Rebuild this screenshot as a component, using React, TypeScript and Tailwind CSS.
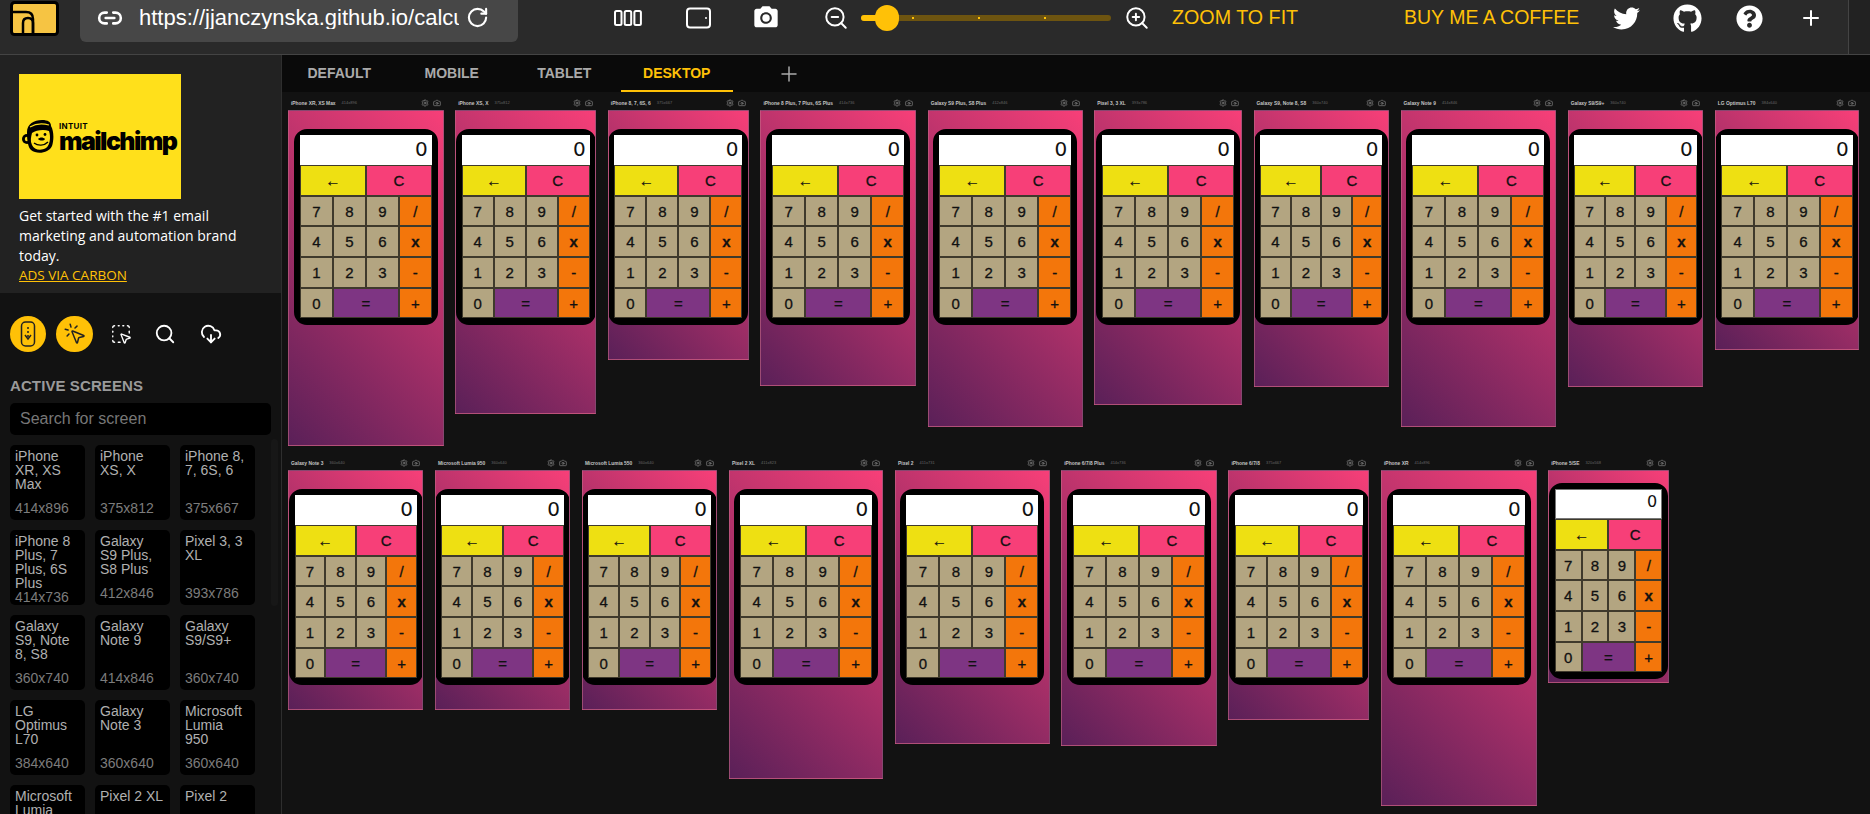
import React from 'react';
import {
  Camera,
  CloudDownload,
  Link2,
  MousePointerClick,
  Plus,
  RotateCw,
  Search,
  Settings,
  SquareDashedMousePointer,
  ZoomIn,
  ZoomOut,
} from 'lucide-react';
import { FaGithub, FaQuestionCircle, FaTwitter } from 'react-icons/fa';
import { MdPhotoCamera } from 'react-icons/md';

const SCALE = 0.375;

interface Device {
  name: string;
  w: number;
  h: number;
}

const topRow: Device[] = [
  { name: 'iPhone XR, XS Max', w: 414, h: 896 },
  { name: 'iPhone XS, X', w: 375, h: 812 },
  { name: 'iPhone 8, 7, 6S, 6', w: 375, h: 667 },
  { name: 'iPhone 8 Plus, 7 Plus, 6S Plus', w: 414, h: 736 },
  { name: 'Galaxy S9 Plus, S8 Plus', w: 412, h: 846 },
  { name: 'Pixel 3, 3 XL', w: 393, h: 786 },
  { name: 'Galaxy S9, Note 8, S8', w: 360, h: 740 },
  { name: 'Galaxy Note 9', w: 414, h: 846 },
  { name: 'Galaxy S9/S9+', w: 360, h: 740 },
  { name: 'LG Optimus L70', w: 384, h: 640 },
];

const bottomRow: Device[] = [
  { name: 'Galaxy Note 3', w: 360, h: 640 },
  { name: 'Microsoft Lumia 950', w: 360, h: 640 },
  { name: 'Microsoft Lumia 550', w: 360, h: 640 },
  { name: 'Pixel 2 XL', w: 411, h: 823 },
  { name: 'Pixel 2', w: 411, h: 731 },
  { name: 'iPhone 6/7/8 Plus', w: 414, h: 736 },
  { name: 'iPhone 6/7/8', w: 375, h: 667 },
  { name: 'iPhone XR', w: 414, h: 896 },
  { name: 'iPhone 5/SE', w: 320, h: 568 },
];

const cards = [
  { name: 'iPhone XR, XS Max', size: '414x896' },
  { name: 'iPhone XS, X', size: '375x812' },
  { name: 'iPhone 8, 7, 6S, 6', size: '375x667' },
  { name: 'iPhone 8 Plus, 7 Plus, 6S Plus', size: '414x736' },
  { name: 'Galaxy S9 Plus, S8 Plus', size: '412x846' },
  { name: 'Pixel 3, 3 XL', size: '393x786' },
  { name: 'Galaxy S9, Note 8, S8', size: '360x740' },
  { name: 'Galaxy Note 9', size: '414x846' },
  { name: 'Galaxy S9/S9+', size: '360x740' },
  { name: 'LG Optimus L70', size: '384x640' },
  { name: 'Galaxy Note 3', size: '360x640' },
  { name: 'Microsoft Lumia 950', size: '360x640' },
  { name: 'Microsoft Lumia 550', size: '360x640' },
  { name: 'Pixel 2 XL', size: '411x823' },
  { name: 'Pixel 2', size: '411x731' },
];

const keyBase =
  'flex items-center justify-center border border-[#3f3a2c] text-[15px] leading-none text-[#111] [-webkit-text-stroke:0.3px_#111]';
const num = `${keyBase} bg-[#b3a581]`;
const op = `${keyBase} bg-[#f3760b]`;

function Calculator({ small }: { small: boolean }) {
  return (
    <div className="grid h-[196px] w-full grid-cols-4 grid-rows-6 rounded-[13px] border-[6px] border-black bg-black">
      <div
        className={
          small
            ? "col-span-4 flex items-start justify-end border border-[#777] bg-white pr-[4px] pt-[3px] font-['DejaVu_Sans',sans-serif] text-[16px] leading-[18px] text-[#111]"
            : "col-span-4 flex items-center justify-end bg-white pb-[1px] pr-[4px] font-['DejaVu_Sans',sans-serif] text-[20px] leading-none text-[#111]"
        }
      >
        0
      </div>
      <div className={`${keyBase} col-span-2 bg-[#eee012]`}>←</div>
      <div className={`${keyBase} col-span-2 bg-[#f73f78]`}>C</div>
      <div className={num}>7</div>
      <div className={num}>8</div>
      <div className={num}>9</div>
      <div className={op}>/</div>
      <div className={num}>4</div>
      <div className={num}>5</div>
      <div className={num}>6</div>
      <div className={`${op} font-bold`}>x</div>
      <div className={num}>1</div>
      <div className={num}>2</div>
      <div className={num}>3</div>
      <div className={op}>-</div>
      <div className={num}>0</div>
      <div className={`${keyBase} col-span-2 bg-[#7e3583]`}>=</div>
      <div className={op}>+</div>
    </div>
  );
}

function Frame({ device }: { device: Device }) {
  const width = device.w * SCALE + 0.4;
  const height = device.h * SCALE + 0.4;
  const small = device.w === 320;
  return (
    <div className="shrink-0" style={{ width }}>
      <div className="flex h-[13.5px] items-center px-[3px] pt-[1px]">
        <span className="whitespace-nowrap text-[4.9px] font-bold text-[#c4c4c4]">{device.name}</span>
        <span className="ml-[6px] whitespace-nowrap text-[4px] text-[#666]">
          {device.w}x{device.h}
        </span>
        <Settings size={8} className="ml-auto shrink-0 text-[#888]" />
        <Camera size={8} className="ml-[4px] shrink-0 text-[#888]" />
      </div>
      <div
        className={`flex flex-col items-center overflow-hidden border border-[#a0607f]/60 bg-[linear-gradient(45deg,#5a2058,#f73f78)] ${small ? 'pt-[12px]' : 'pt-[18px]'}`}
        style={{ height }}
      >
        <div className="shrink-0" style={{ width: Math.min(width - 1, 144) }}>
          <Calculator small={small} />
        </div>
      </div>
    </div>
  );
}

function AppLogo() {
  return (
    <svg width="49" height="35" viewBox="0 0 49 35" className="mt-[1px] ml-[10px] shrink-0">
      <rect x="1.5" y="1.5" width="46" height="32" rx="3" fill="#f6c443" stroke="#000" strokeWidth="3" />
      <path d="M2 11 H16 Q23 11 23 18 V33" fill="none" stroke="#000" strokeWidth="2.5" />
      <path d="M13 33 V22 Q13 17 18 17 Q23 17 23 22 V33" fill="none" stroke="#000" strokeWidth="2.5" />
    </svg>
  );
}

function DevicesIcon() {
  return (
    <svg width="28" height="20" viewBox="0 0 28 20" fill="none" stroke="#fff" strokeWidth="2">
      <rect x="1" y="3" width="6.5" height="14" rx="1.5" />
      <rect x="10.7" y="3" width="6.5" height="14" rx="1.5" />
      <rect x="20.4" y="3" width="6.5" height="14" rx="1.5" />
    </svg>
  );
}

function TabletIcon() {
  return (
    <svg width="25" height="22" viewBox="0 0 25 22" fill="none">
      <rect x="1" y="1.5" width="23" height="19" rx="3" stroke="#fff" strokeWidth="2" />
      <circle cx="20" cy="11" r="1" fill="#fff" />
    </svg>
  );
}

function PhoneScrollIcon() {
  return (
    <svg width="16" height="26" viewBox="0 0 16 26" fill="none" stroke="#222" strokeWidth="1.5">
      <rect x="1.5" y="1" width="13" height="24" rx="4" />
      <path d="M8 6 V16" strokeDasharray="2 2" />
      <path d="M5 14 L8 18 L11 14" />
    </svg>
  );
}

function Freddie() {
  return (
    <svg width="32" height="35" viewBox="0 0 32 35" className="shrink-0">
      <circle cx="5" cy="20" r="5" fill="#000" />
      <circle cx="5" cy="20" r="2.2" fill="#ffe01b" />
      <path d="M5 13 C5 5 12 1 20 1 C26 1 29 3 29 7 C32 12 32 21 30 27 C27 34 15 36 9 31 C6 28 5 22 5 13 Z" fill="#000" />
      <path d="M10 14 C14 11 22 10 27 12 C29 18 28 26 24 29 C19 32 12 31 10 26 C8 22 9 18 10 14 Z" fill="#ffe01b" />
      <path d="M8 8 C13 5 20 4 27 6" stroke="#ffe01b" strokeWidth="1.1" fill="none" />
      <circle cx="15" cy="16" r="1.4" fill="#000" />
      <circle cx="23" cy="15.5" r="1.4" fill="#000" />
      <path d="M16 20 C18 18 21 18 23 20 C22 22 18 22 16 20 Z" fill="#000" />
      <path d="M12 24 C16 27 22 27 26 23" stroke="#000" strokeWidth="1.4" fill="none" />
    </svg>
  );
}

function TopBar() {
  return (
    <header className="flex h-[55px] shrink-0 items-start border-b border-[#444] bg-[#2a2a2a]">
      <AppLogo />
      <div className="ml-[21px] flex h-[42px] w-[438px] shrink-0 items-center rounded-b-[6px] bg-[#474747] pb-[7px] pl-[17px]">
        <Link2 size={26} strokeWidth={2.4} className="shrink-0 text-white" />
        <span className="ml-[16px] w-[320px] overflow-hidden whitespace-nowrap text-[22px] leading-none text-white">
          https://jjanczynska.github.io/calculator
        </span>
        <RotateCw size={23} strokeWidth={2.2} className="ml-[7px] shrink-0 text-white" />
      </div>
      <div className="flex h-[36px] items-center text-white">
        <div className="ml-[96px]"><DevicesIcon /></div>
        <div className="ml-[44px]"><TabletIcon /></div>
        <MdPhotoCamera size={28} className="ml-[41px]" />
        <ZoomOut size={26} strokeWidth={1.8} className="ml-[43px]" />
        <div className="relative ml-[12px] h-[6px] w-[250px] rounded-full bg-[#6d5410]">
          <div className="h-[6px] w-[26px] rounded-full bg-[#ffc107]" />
          <div className="absolute left-[14px] top-[-10px] h-[26px] w-[24px] rounded-full bg-[#ffc107]" />
          <div className="absolute left-[51px] top-[2px] h-[2px] w-[2px] bg-[#ffc107]" />
          <div className="absolute left-[117px] top-[2px] h-[2px] w-[2px] bg-[#ffc107]" />
          <div className="absolute left-[183px] top-[2px] h-[2px] w-[2px] bg-[#ffc107]" />
        </div>
        <ZoomIn size={26} strokeWidth={1.8} className="ml-[13px]" />
        <span className="ml-[22px] w-[126px] whitespace-nowrap text-[19.7px] text-[#ffc107]">ZOOM TO FIT</span>
        <span className="ml-[106px] w-[175px] whitespace-nowrap text-[19.5px] text-[#ffc107]">BUY ME A COFFEE</span>
        <FaTwitter size={27} className="ml-[34px]" />
        <FaGithub size={29} className="ml-[33px]" />
        <FaQuestionCircle size={27} className="ml-[34px]" />
        <Plus size={24} className="ml-[36px]" />
      </div>
      <div className="ml-auto h-full w-[22px] border-l border-[#444] bg-[#222]" />
    </header>
  );
}

function Sidebar() {
  return (
    <aside className="relative flex w-[282px] shrink-0 flex-col overflow-hidden border-r border-[#2e2e2e] bg-[#121212]">
      <div className="h-[238px] shrink-0 bg-[#222] pl-[19px] pt-[19px]">
        <div className="flex h-[125px] w-[162px] items-center gap-[5px] bg-[#ffe01b] pl-[3px]">
          <Freddie />
          <div className="flex flex-col font-['Inter',sans-serif] text-black">
            <span className="text-[8px] font-bold leading-[8px] tracking-[0.3px]">INTUIT</span>
            <span className="text-[25px] font-black leading-[22px] tracking-[-1.6px]">mailchimp</span>
          </div>
        </div>
        <p className="mt-[7px] w-[240px] font-['Open_Sans',sans-serif] text-[14px] leading-[20px] text-white">
          Get started with the #1 email marketing and automation brand today.
        </p>
        <a className="block font-['Open_Sans',sans-serif] text-[13.5px] leading-[18px] text-[#ffc107] underline">ADS VIA CARBON</a>
      </div>
      <div className="flex items-center pl-[10px] pt-[23px] text-white">
        <div className="flex h-[36px] w-[36px] items-center justify-center rounded-full bg-[#ffc107]">
          <PhoneScrollIcon />
        </div>
        <div className="ml-[10px] flex h-[36px] w-[37px] items-center justify-center rounded-full bg-[#ffc107]">
          <MousePointerClick size={24} strokeWidth={1.5} className="text-[#222]" />
        </div>
        <SquareDashedMousePointer size={22} strokeWidth={1.5} className="ml-[17px]" />
        <Search size={22} strokeWidth={2} className="ml-[22px]" />
        <CloudDownload size={22} strokeWidth={2} className="ml-[24px]" />
      </div>
      <h2 className="ml-[10px] mt-[25px] text-[15px] font-bold leading-[17px] tracking-[0.1px] text-[#9a9a9a]">ACTIVE SCREENS</h2>
      <div className="ml-[10px] mt-[9px] flex h-[32px] w-[261px] shrink-0 items-center rounded-[5px] bg-black pl-[10px] text-[16px] text-[#777]">
        Search for screen
      </div>
      <div className="ml-[10px] mt-[10px] grid w-[245px] grid-cols-3 gap-[10px]">
        {cards.map((card) => (
          <div key={card.name} className="flex h-[75px] flex-col justify-between rounded-[5px] bg-black pb-[5px] pl-[5px] pr-[6px] pt-[4px] text-[14px] leading-[14px]">
            <span className="text-[#b0b0b0]">{card.name}</span>
            <span className="text-[#7c7c7c]">{card.size}</span>
          </div>
        ))}
      </div>
      <div className="absolute right-[3px] top-[384px] h-[167px] w-[7px] rounded-full bg-[#171717]" />
    </aside>
  );
}

function Tabs() {
  const tabs = ['DEFAULT', 'MOBILE', 'TABLET', 'DESKTOP'];
  return (
    <div className="flex h-[37px] shrink-0 items-stretch bg-[#0a0a0a] pl-[1px] text-[14px] font-bold">
      {tabs.map((tab) => (
        <div
          key={tab}
          className={
            tab === 'DESKTOP'
              ? 'flex w-[112.5px] items-center justify-center border-b-2 border-[#ffc107] pt-[2px] text-[#ffc107]'
              : 'flex w-[112.5px] items-center justify-center text-[#aaa]'
          }
        >
          {tab}
        </div>
      ))}
      <div className="ml-[44px] flex items-center">
        <Plus size={24} strokeWidth={1.5} className="text-[#aaa]" />
      </div>
    </div>
  );
}

export default function App() {
  return (
    <div className="flex h-screen flex-col overflow-hidden bg-[#121212] font-['Liberation_Sans',Arial,sans-serif]">
      <TopBar />
      <div className="flex min-h-0 flex-1">
        <Sidebar />
        <main className="min-w-0 flex-1 overflow-hidden">
          <Tabs />
          <div className="pl-[6px] pt-[4px]">
            <div className="flex h-[350px] items-start gap-[11.6px]">
              {topRow.map((device) => (
                <Frame key={device.name} device={device} />
              ))}
            </div>
            <div className="mt-[10px] flex items-start gap-[11.6px]">
              {bottomRow.map((device) => (
                <Frame key={device.name} device={device} />
              ))}
            </div>
          </div>
        </main>
      </div>
    </div>
  );
}
